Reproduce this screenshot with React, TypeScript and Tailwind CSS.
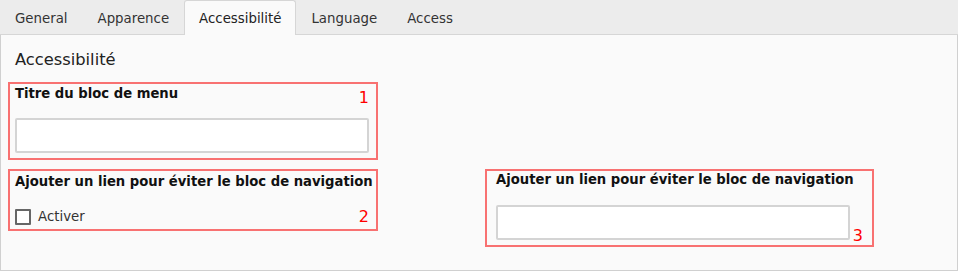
import React from 'react';

const tabs = ['General', 'Apparence', 'Accessibilité', 'Language', 'Access'];

const App: React.FC = () => {
  const active = 'Accessibilité';

  return (
    <div className="w-[958px] h-[271px] bg-[#fafafa] text-[#222] font-['DejaVu_Sans',sans-serif]">
      {/* Tabs */}
      <div className="flex items-end h-[35px] bg-[#ececec] border-b border-[#d6d6d6]">
        {tabs.map((tab) => (
          <div
            key={tab}
            className={
              tab === active
                ? 'h-[35px] -mb-px px-[14px] pt-px flex items-center text-[13.33px] text-[#222] bg-[#fafafa] border border-b-0 border-[#d6d6d6] rounded-t-[3px]'
                : 'h-[34px] px-[14px] pt-[2px] flex items-center text-[13.33px] text-[#333] border border-transparent border-b-0'
            }
          >
            {tab}
          </div>
        ))}
      </div>

      {/* Panel */}
      <div className="h-[236px] border-x border-b border-[#d0d0d0] pl-[7px] pt-[15px]">
        <h2 className="pl-[7px] text-[16.3px] leading-[20px] text-[#222]">Accessibilité</h2>

        {/* 1 */}
        <div className="relative mt-[12px] w-[370px] h-[78px] border-2 border-[#f87171] pl-[5px] pt-[2px]">
          <div className="text-[13.2px] leading-[16px] font-bold text-[#111]">Titre du bloc de menu</div>
          <input
            type="text"
            className="mt-[16px] w-[354px] h-[35px] bg-white border-2 border-[#d4d4d4] rounded-[2px] outline-none"
          />
          <span className="absolute right-[7px] top-[4px] text-[16px] leading-[20px] text-[#ff0000]">1</span>
        </div>

        <div className="flex items-start mt-[9px]">
          {/* 2 */}
          <div className="relative w-[370px] h-[62px] border-2 border-[#f87171] pl-[5px] pt-[3px]">
            <div className="text-[13.2px] leading-[16px] font-bold text-[#111] whitespace-nowrap">
              Ajouter un lien pour éviter le bloc de navigation
            </div>
            <label className="mt-[17px] flex items-center gap-[7px] text-[13.33px] text-[#333]">
              <span className="w-[16px] h-[16px] bg-white border-2 border-[#666] rounded-[1px]" />
              Activer
            </label>
            <span className="absolute right-[7px] top-[36px] text-[16px] leading-[20px] text-[#ff0000]">2</span>
          </div>

          {/* 3 */}
          <div className="relative ml-[107px] w-[389px] h-[78px] border-2 border-[#f87171] pl-[9px] pt-[1px]">
            <div className="text-[13.2px] leading-[16px] font-bold text-[#111] whitespace-nowrap">
              Ajouter un lien pour éviter le bloc de navigation
            </div>
            <input
              type="text"
              className="mt-[17px] w-[354px] h-[35px] bg-white border-2 border-[#d4d4d4] rounded-[2px] outline-none"
            />
            <span className="absolute right-[9px] top-[55px] text-[16px] leading-[20px] text-[#ff0000]">3</span>
          </div>
        </div>
      </div>
    </div>
  );
};

export default App;
